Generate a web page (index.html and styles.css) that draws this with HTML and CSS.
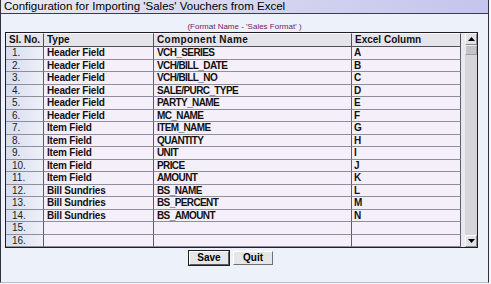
FILE: index.html
```html
<!DOCTYPE html>
<html lang="en">
  <head>
    <meta charset="UTF-8" />
    <title>Configuration for Importing 'Sales' Vouchers from Excel</title>
    <link rel="stylesheet" href="styles.css">
  </head>
  <body>
    <div class="window">
      <div class="titlebar">Configuration for Importing 'Sales' Vouchers from Excel</div>
      <div class="content">
        <p class="format">(Format Name - 'Sales Format' )</p>
        <div class="grid-frame">
          <table class="grid">
            <colgroup>
              <col class="c-no" />
              <col class="c-type" />
              <col class="c-name" />
              <col class="c-col" />
            </colgroup>
            <thead>
              <tr>
                <th>Sl. No.</th>
                <th>Type</th>
                <th>Component Name</th>
                <th>Excel Column</th>
              </tr>
            </thead>
            <tbody id="rows"></tbody>
          </table>
          <div class="gap"></div>
          <div class="scrollbar">
            <div class="sb-btn">
              <svg width="7" height="4" viewBox="0 0 7 4"><path d="M0 4 L3.5 0 L7 4 Z" fill="#000" /></svg>
            </div>
            <div class="sb-thumb"></div>
            <div class="sb-track"></div>
            <div class="sb-btn">
              <svg width="7" height="4" viewBox="0 0 7 4"><path d="M0 0 L3.5 4 L7 0 Z" fill="#000" /></svg>
            </div>
          </div>
        </div>
        <div class="actions">
          <button type="button" class="btn btn-default">Save</button>
          <button type="button" class="btn">Quit</button>
        </div>
      </div>
    </div>
    <script>
      const rows = [
        ["Header Field", "VCH_SERIES", "A"],
        ["Header Field", "VCH/BILL_DATE", "B"],
        ["Header Field", "VCH/BILL_NO", "C"],
        ["Header Field", "SALE/PURC_TYPE", "D"],
        ["Header Field", "PARTY_NAME", "E"],
        ["Header Field", "MC_NAME", "F"],
        ["Item Field", "ITEM_NAME", "G"],
        ["Item Field", "QUANTITY", "H"],
        ["Item Field", "UNIT", "I"],
        ["Item Field", "PRICE", "J"],
        ["Item Field", "AMOUNT", "K"],
        ["Bill Sundries", "BS_NAME", "L"],
        ["Bill Sundries", "BS_PERCENT", "M"],
        ["Bill Sundries", "BS_AMOUNT", "N"],
        ["", "", ""],
        ["", "", ""]
      ];
      const body = document.getElementById("rows");
      rows.forEach((r, i) => {
        const tr = document.createElement("tr");
        tr.innerHTML =
          '<td class="no">' + (i + 1) + ".</td>" +
          '<td class="type">' + r[0] + "</td>" +
          '<td class="name">' + r[1] + "</td>" +
          "<td>" + r[2] + "</td>";
        body.appendChild(tr);
      });
    </script>
  </body>
</html>
```
FILE: styles.css
```css
* {
  box-sizing: border-box;
}
body {
  margin: 0;
  background-color: #f4f6fb;
  font-family: "Liberation Sans", Arial, sans-serif;
}
.window {
  width: 489px;
  height: 283px;
  border-left: 1px solid #303040;
  border-right: 1px solid #303040;
  border-bottom: 1px solid #b8bcc8;
  background-color: #edf1fa;
}
.titlebar {
  height: 14px;
  line-height: 13px;
  padding-left: 3px;
  font-size: 11.5px;
  color: #000;
  border-bottom: 1px solid #3c3c50;
  background: linear-gradient(to right, #e8e9f0, #c4c4ee);
  white-space: nowrap;
}
.content {
  padding-top: 7px;
}
.format {
  margin: 0;
  height: 11px;
  line-height: 11px;
  font-size: 8px;
  text-align: center;
  color: #7a2060;
}
.grid-frame {
  display: flex;
  width: 473px;
  height: 216px;
  margin-left: 4px;
  border: 1px solid #1e1e28;
  background-color: #e9eaf0;
}
.grid {
  width: 455px;
  border-collapse: separate;
  border-spacing: 0;
  table-layout: fixed;
  font-size: 10px;
  font-weight: bold;
  color: #111;
}
.c-no {
  width: 38px;
}
.c-type {
  width: 110px;
}
.c-name {
  width: 198px;
}
.c-col {
  width: 109px;
}
.grid th {
  height: 14px;
  padding: 0 0 0 3px;
  text-align: left;
  line-height: 12px;
  font-size: 10px;
  background-color: #e4e4ea;
  border-top: 1px solid #fafafa;
  border-right: 1px solid #50505c;
  border-bottom: 1px solid #50505c;
  white-space: nowrap;
}
.grid th:nth-child(3) {
  letter-spacing: 0.4px;
}
.grid td {
  height: 12.5px;
  padding: 0 0 0 3px;
  line-height: 11px;
  background-color: #f4eff9;
  border-right: 1px solid #5c5c6c;
  border-bottom: 1px solid #8e8e9e;
  white-space: nowrap;
  overflow: hidden;
}
.grid td.type {
  letter-spacing: -0.2px;
}
.grid td.name {
  letter-spacing: -0.6px;
}
.grid td:last-child {
  padding-left: 2px;
}
.grid td.no {
  padding-left: 6px;
  font-weight: normal;
  color: #222;
  background: linear-gradient(to right, #d7ddef, #eef0f8);
}
.gap {
  width: 4px;
}
.scrollbar {
  display: flex;
  flex-direction: column;
  width: 12px;
  background-color: #d6d6d8;
}
.sb-btn {
  display: flex;
  align-items: center;
  justify-content: center;
  height: 12px;
  background-color: #e2e2e4;
  border: 1px solid;
  border-color: #fff #8a8a8e #8a8a8e #fff;
}
.sb-thumb {
  height: 10px;
  background-color: #c4c4c8;
  border: 1px solid;
  border-color: #ececee #a0a0a4 #a0a0a4 #ececee;
}
.sb-track {
  flex: 1;
}
.actions {
  display: flex;
  gap: 4px;
  padding-left: 188px;
  margin-top: 3px;
}
.btn {
  width: 40px;
  height: 14px;
  padding: 0;
  font-family: "Liberation Sans", Arial, sans-serif;
  font-size: 10px;
  font-weight: bold;
  line-height: 10px;
  color: #000;
  background-color: #e6e6e8;
  border: 1px solid;
  border-color: #fff #707074 #707074 #fff;
}
.btn-default {
  outline: 1px solid #202020;
  outline-offset: 0;
  border-color: #fff #5c5c60 #5c5c60 #fff;
}
```
